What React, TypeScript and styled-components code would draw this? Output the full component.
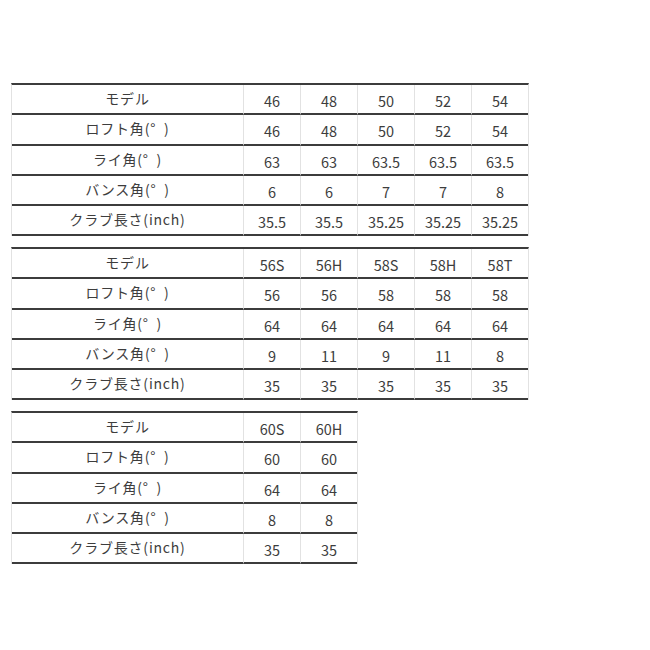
import React from "react";
import styled, { createGlobalStyle } from "styled-components";

const Global = createGlobalStyle`
  html, body { margin: 0; padding: 0; background: #ffffff; }
  body { font-family: "Noto Sans CJK JP", "Noto Sans", sans-serif; color: #3d3d3d; }
`;

const Page = styled.div`
  display: flex;
  flex-direction: column;
  align-items: flex-start;
  gap: 10.5px;
  padding: 83px 0 0 11px;
`;

const Table = styled.div<{ $cols: number }>`
  display: grid;
  grid-template-columns: 231px repeat(${(p) => p.$cols}, 57px);
  border-top: 2px solid #3c3c3c;
  border-left: 1px solid #e2e2e2;
  border-right: 1px solid #e2e2e2;
`;

const Row = styled.div`
  display: contents;
`;

const Cell = styled.div`
  box-sizing: border-box;
  height: 30.3px;
  border-bottom: 2px solid #3c3c3c;
  display: flex;
  align-items: center;
  justify-content: center;
  white-space: nowrap;
`;

const Label = styled(Cell)`
  font-size: 14px;
  letter-spacing: 0.8px;
  padding-bottom: 2px;
`;

const Value = styled(Cell)`
  font-size: 14.5px;
  border-left: 1px solid #e2e2e2;
  padding-top: 3px;
`;

const labels = [
  "モデル",
  "ロフト角(°\u2002)",
  "ライ角(°\u2002)",
  "バンス角(°\u2002)",
  "クラブ長さ(inch)",
];

const tables: string[][][] = [
  [
    ["46", "48", "50", "52", "54"],
    ["46", "48", "50", "52", "54"],
    ["63", "63", "63.5", "63.5", "63.5"],
    ["6", "6", "7", "7", "8"],
    ["35.5", "35.5", "35.25", "35.25", "35.25"],
  ],
  [
    ["56S", "56H", "58S", "58H", "58T"],
    ["56", "56", "58", "58", "58"],
    ["64", "64", "64", "64", "64"],
    ["9", "11", "9", "11", "8"],
    ["35", "35", "35", "35", "35"],
  ],
  [
    ["60S", "60H"],
    ["60", "60"],
    ["64", "64"],
    ["8", "8"],
    ["35", "35"],
  ],
];

export default function App() {
  return (
    <>
      <Global />
      <Page>
        {tables.map((rows, ti) => (
          <Table key={ti} $cols={rows[0].length}>
            {rows.map((vals, ri) => (
              <Row key={ri}>
                <Label>{labels[ri]}</Label>
                {vals.map((v, vi) => (
                  <Value key={vi}>{v}</Value>
                ))}
              </Row>
            ))}
          </Table>
        ))}
      </Page>
    </>
  );
}
